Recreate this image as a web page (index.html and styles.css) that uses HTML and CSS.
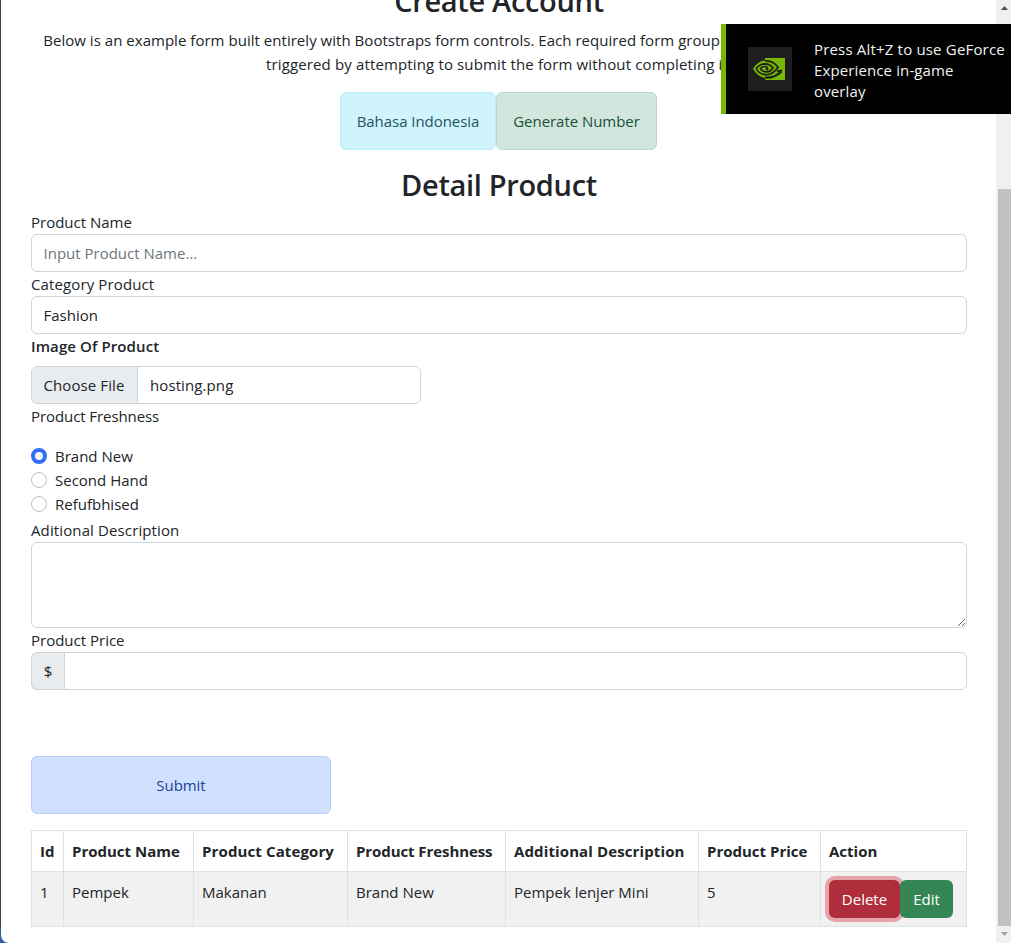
FILE: index.html
```
<!DOCTYPE html>
<html lang="en">
<head>
<meta charset="utf-8">
<title>Create Account</title>
<link rel="stylesheet" href="styles.css">
</head>
<body>
<div class="window">
  <main class="page">
    <h2 class="title">Create Account</h2>
    <p class="lead"><span class="line-one">Below is an example form built entirely with Bootstraps form controls. Each required form group has a validation state that can be</span><br><span class="line-two">triggered by attempting to submit the form without completing it.</span></p>
    <div class="actions">
      <button class="alert info">Bahasa Indonesia</button>
      <button class="alert success">Generate Number</button>
    </div>
    <h2 class="title detail">Detail Product</h2>
    <form class="form">
      <label class="label" for="name">Product Name</label>
      <input class="control" id="name" type="text" placeholder="Input Product Name...">
      <label class="label wide" for="category">Category Product</label>
      <div class="control" id="category">Fashion</div>
      <div class="label strong">Image Of Product</div>
      <div class="file"><span class="choose">Choose File</span><span class="filename">hosting.png</span></div>
      <div class="label narrow">Product Freshness</div>
      <div class="radios">
        <label class="radio"><i class="dot checked"></i>Brand New</label>
        <label class="radio"><i class="dot"></i>Second Hand</label>
        <label class="radio"><i class="dot"></i>Refufbhised</label>
      </div>
      <label class="label wide" for="description">Aditional Description</label>
      <textarea class="control area" id="description"></textarea>
      <label class="label" for="price">Product Price</label>
      <div class="group"><span class="prefix">$</span><input class="control price" id="price" type="text"></div>
      <button class="alert submit" type="button">Submit</button>
    </form>
    <table class="table">
      <colgroup><col class="c-id"><col class="c-name"><col class="c-cat"><col class="c-fresh"><col class="c-desc"><col class="c-price"><col class="c-action"></colgroup>
      <thead><tr><th>Id</th><th>Product Name</th><th class="wide">Product Category</th><th class="narrow">Product Freshness</th><th class="wide">Additional Description</th><th>Product Price</th><th>Action</th></tr></thead>
      <tbody><tr><td>1</td><td>Pempek</td><td>Makanan</td><td>Brand New</td><td>Pempek lenjer Mini</td><td>5</td><td><div class="buttons"><button class="btn delete">Delete</button><button class="btn edit">Edit</button></div></td></tr></tbody>
    </table>
  </main>
  <div class="scrollbar">
    <svg class="arrow" viewBox="0 0 15 17"><path d="M5 10h7L8.500 6z" fill="#505050"/></svg>
    <div class="thumb"></div>
    <svg class="arrow" viewBox="0 0 15 17"><path d="M5 6h7l-3.500 4z" fill="#a3a3a3"/></svg>
  </div>
</div>
<aside class="toast">
  <svg class="logo" viewBox="0 0 44 44">
    <rect width="44" height="44" fill="#1e1e1e"/>
    <path d="M17 11h20v22H17z" fill="#76b900"/>
    <path d="M5 21.500Q10.500 14 17 13.500V31Q9 29.500 5 21.500z" fill="#76b900"/>
    <g fill="none" stroke="#1e1e1e" stroke-width="1.700">
      <path d="M17 14Q25.500 13.500 30 20.500Q25 27.500 18 27.800Q10.500 27 8.200 21.500Q12 16.800 17 16.800Q22.500 17 25 21Q22.500 25 18 24.800Q13.500 24.500 12.500 21.500Q14.500 19.300 17.500 19.500Q20 20 19.300 22.500L17.500 22"/>
      <path d="M17 30.700Q27 31 33.500 24.500" stroke-width="2.200"/>
      <path d="M29 24.500L34 23.500" stroke-width="2"/>
    </g>
  </svg>
  <div class="message"><span class="first">Press Alt+Z to use GeForce</span><br>Experience in-game<br>overlay</div>
</aside>
</body>
</html>
```
FILE: styles.css
```
* { box-sizing: border-box; }
body {
  margin: 0;
  height: 943px;
  overflow: hidden;
  background: linear-gradient(#3c4147 928px, #2b62a4 928px);
  color: #212529;
  font: 15px/24px "Open Sans", "Noto Sans", sans-serif;
}
button, input, textarea { font: inherit; color: inherit; letter-spacing: inherit; }
.window {
  display: flex;
  height: 943px;
  margin-left: 1px;
  overflow: hidden;
  background: #fff;
  border-bottom-left-radius: 8px;
}
.page { flex: 1; padding: 0 29px 0 30px; margin-top: -18px; }
.title { margin: 0; height: 38px; text-align: center; font-size: 29px; font-weight: 600; line-height: 38px; letter-spacing: -0.32px; }
.lead { margin: 8px 0 16px; text-align: center; white-space: nowrap; }
.line-one { letter-spacing: 0.03px; }
.line-two { letter-spacing: 0.14px; }
.wide { letter-spacing: 0.12px; }
.narrow { letter-spacing: -0.08px; }
.actions { display: flex; justify-content: center; margin-right: 1px; }
.alert { height: 58px; padding: 0 15px; border: 1px solid; border-radius: 6px; white-space: nowrap; letter-spacing: -0.05px; }
.info { width: 156px; background: #cff4fc; border-color: #b6effb; color: #24535d; }
.success { width: 161px; background: #d1e7dd; border-color: #badbcc; color: #1c5038; }
.detail { margin: 16px 0 6px; }
.form { display: flex; flex-direction: column; align-items: stretch; }
.label { height: 24px; }
.strong { height: 32px; font-weight: 600; letter-spacing: 0.1px; }
.control {
  width: 100%;
  height: 38px;
  padding: 6px 11.5px;
  border: 1px solid #ced4da;
  border-radius: 6px;
  background: #fff;
  outline: 0;
}
.control::placeholder { color: #6c757d; opacity: 1; }
.file { display: flex; width: 390px; height: 38px; border: 1px solid #ced4da; border-radius: 6px; overflow: hidden; line-height: 36px; letter-spacing: 0.1px; }
.choose { width: 106px; padding-left: 11.5px; background: #e9ecef; border-right: 1px solid #ced4da; }
.filename { padding-left: 12px; }
.radios { display: flex; flex-direction: column; margin: 16px 0 2px; }
.radio { display: flex; align-items: center; gap: 8px; height: 24px; }
.dot { width: 16px; height: 16px; border: 1px solid #bfbfbf; border-radius: 50%; background: #fff; }
.dot.checked { border: 4px solid #2f6dfb; }
.area { height: 86px; display: block; }
.group { display: flex; height: 38px; }
.prefix { width: 33px; border: 1px solid #ced4da; border-right: 0; border-radius: 6px 0 0 6px; background: #e9ecef; text-align: center; line-height: 36px; }
.price { flex: 1; width: auto; border-radius: 0 6px 6px 0; }
.submit { width: 300px; margin: 66px 0 16px; background: #d0e0ff; border-color: #b6d0fe; color: #24419a; }
.table { width: 936px; table-layout: fixed; border-collapse: collapse; }
.table th, .table td { padding: 8px; border: 1px solid #dee2e6; text-align: left; vertical-align: top; white-space: nowrap; }
.table th { height: 41px; font-weight: 700; }
.table td { height: 55px; background: #f1f1f1; }
.c-id { width: 32px; }
.c-name { width: 130px; }
.c-cat { width: 154px; }
.c-fresh { width: 158px; }
.c-desc { width: 193px; }
.c-price { width: 122px; }
.c-action { width: 146px; }
.buttons { display: flex; }
.btn { height: 38px; padding: 0; border: 0; border-radius: 6px; color: #fff; }
.delete { width: 71px; background: #b02e3b; box-shadow: 0 0 0 4px #e6a3aa; }
.edit { position: relative; width: 53px; background: #348754; }
.scrollbar { display: flex; flex-direction: column; width: 15px; background: #f0f0f0; }
.arrow { flex: none; width: 15px; height: 17px; }
.thumb { height: 737px; margin: 172px 0 0 2px; background: #c1c1c1; }
.toast {
  position: absolute;
  top: 24px;
  left: 721px;
  display: flex;
  gap: 22px;
  width: 290px;
  height: 90px;
  padding: 15px 0 0 22px;
  border-left: 5px solid #76b900;
  background: #000;
  color: #f2f2f2;
  line-height: 21px;
  letter-spacing: 0.12px;
  white-space: nowrap;
}
.first { letter-spacing: 0.18px; }
.logo { width: 44px; height: 44px; margin-top: 8px; }
```
